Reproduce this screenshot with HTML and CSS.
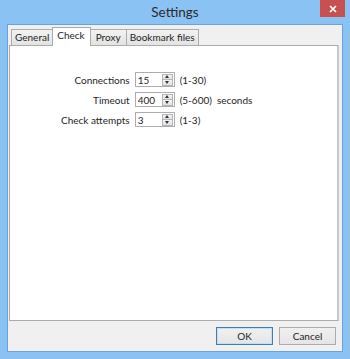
FILE: index.html
```html
<!DOCTYPE html>
<html lang="en">
<head>
    <meta charset="UTF-8">
    <title>Settings</title>
    <link rel="stylesheet" href="styles.css">
</head>
<body>

    <div class="window">
        <div class="titlebar">
            <span class="title">Settings</span>
            <button class="close" type="button" aria-label="Close">
                <svg width="8" height="8" viewBox="0 0 8 8">
                    <path d="M1 1 L7 7 M7 1 L1 7" stroke="#fff" stroke-width="1.7"/>
                </svg>
            </button>
        </div>

        <div class="client">
            <div class="tabs">
                <span class="tab">General</span>
                <span class="tab active">Check</span>
                <span class="tab wide">Proxy</span>
                <span class="tab">Bookmark files</span>
            </div>

            <div class="panel">
                <div class="form">
                    <label class="field-label" for="connections">Connections</label>
                    <div class="spin">
                        <input id="connections" type="text" value="15">
                        <span class="spin-btn"><i class="up"></i><i class="down"></i></span>
                    </div>
                    <span class="hint">(1-30)</span>

                    <label class="field-label" for="timeout">Timeout</label>
                    <div class="spin">
                        <input id="timeout" type="text" value="400">
                        <span class="spin-btn"><i class="up"></i><i class="down"></i></span>
                    </div>
                    <span class="hint">(5-600)<span class="unit">seconds</span></span>

                    <label class="field-label" for="attempts">Check attempts</label>
                    <div class="spin">
                        <input id="attempts" type="text" value="3">
                        <span class="spin-btn"><i class="up"></i><i class="down"></i></span>
                    </div>
                    <span class="hint">(1-3)</span>
                </div>
            </div>

            <div class="actions">
                <button class="btn default" type="button">OK</button>
                <button class="btn" type="button">Cancel</button>
            </div>
        </div>
    </div>

</body>
</html>
```

FILE: styles.css
```css
body {
    margin: 0;
    font-family: Lato, "Noto Sans", sans-serif;
    font-size: 10px;
    color: #1e1e1e;
}

.window {
    width: 350px;
    height: 359px;
    background-color: #8ac2f4;
    display: flex;
    flex-direction: column;
}

.titlebar {
    height: 24px;
    position: relative;
    display: flex;
    justify-content: center;
    align-items: center;
}

.title {
    font-size: 13.5px;
    color: #2b2b2b;
    margin-top: -1px;
}

.close {
    position: absolute;
    top: 0;
    right: 5px;
    width: 25px;
    height: 17px;
    border: none;
    padding: 0;
    background-color: #c75050;
    display: flex;
    align-items: center;
    justify-content: center;
}

.client {
    flex: 1;
    margin: 0 7px 7px 7px;
    border: 1px solid #6aa3d8;
    background-color: #f0f0f0;
    display: flex;
    flex-direction: column;
    padding: 3px 3px 0 1px;
}

/* tab strip */
.tabs {
    display: flex;
    align-items: flex-end;
    height: 17px;
    padding-left: 2px;
    position: relative;
    z-index: 1;
}

.tab {
    height: 15px;
    line-height: 15px;
    padding: 0 3px;
    border: 1px solid #acacac;
    border-bottom: none;
    margin-right: -1px;
    background: linear-gradient(#f2f2f2, #e3e3e3);
}

.tab.wide {
    padding: 0 5px;
}

.tab.active {
    height: 18px;
    line-height: 15px;
    background: #fff;
    padding: 0 5px 0 4px;
    margin-bottom: -1px;
    position: relative;
}

.panel {
    flex: 1;
    background-color: #fff;
    border: 1px solid #acacac;
    border-right: 2px solid #c8c8c8;
    padding: 26px 0 0 51px;
}

.form {
    display: grid;
    grid-template-columns: auto 40px auto;
    justify-content: start;
    column-gap: 5px;
    row-gap: 5px;
    align-items: center;
    justify-items: start;
}

.field-label {
    justify-self: end;
}

.spin {
    display: flex;
    align-items: center;
    height: 15px;
    width: 40px;
    box-sizing: border-box;
    border: 1px solid #abadb3;
    background: #fff;
}

.spin input {
    border: none;
    outline: none;
    padding: 0 0 0 2px;
    width: 24px;
    min-width: 0;
    font: inherit;
    color: #1e1e1e;
    background: transparent;
}

.spin-btn {
    display: flex;
    flex-direction: column;
    width: 11px;
    height: 12px;
    margin-left: auto;
    margin-right: 1px;
}

.spin-btn i {
    flex: 1;
    display: flex;
    align-items: center;
    justify-content: center;
    border: 1px solid #b5b5b5;
    background: linear-gradient(#f4f4f4, #e2e2e2);
}

.spin-btn .down {
    border-top: none;
}

.spin-btn i::before {
    content: "";
    width: 0;
    height: 0;
    border-left: 2.5px solid transparent;
    border-right: 2.5px solid transparent;
}

.spin-btn .up::before {
    border-bottom: 3px solid #333;
}

.spin-btn .down::before {
    border-top: 3px solid #333;
}

.unit {
    margin-left: 5px;
}

/* dialog buttons */
.actions {
    display: flex;
    justify-content: flex-end;
    gap: 6px;
    padding: 6px 3px 0 0;
    height: 30px;
    box-sizing: border-box;
}

.btn {
    width: 57px;
    height: 18px;
    padding: 0;
    font: inherit;
    color: #1e1e1e;
    border: 1px solid #acacac;
    background: linear-gradient(#f0f0f0, #e5e5e5);
}

.btn.default {
    border-color: #3c7fb1;
    box-shadow: inset 0 0 0 1px #c3dff5;
}
```
